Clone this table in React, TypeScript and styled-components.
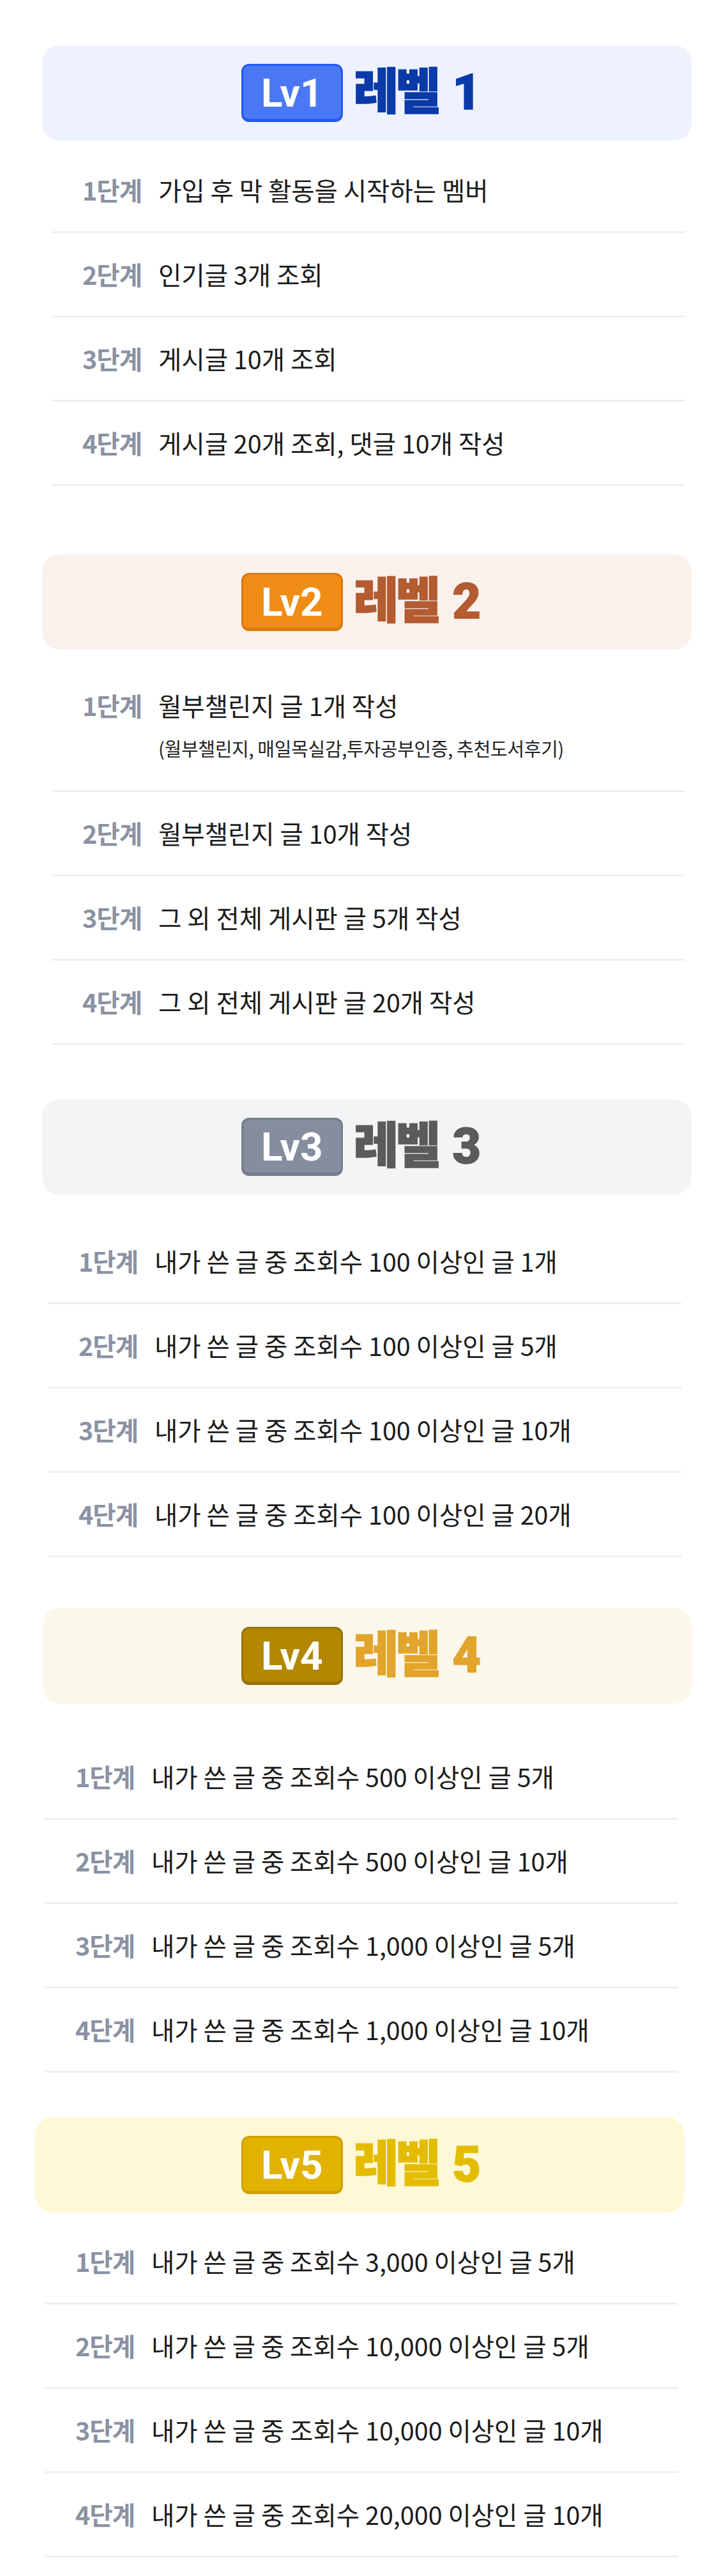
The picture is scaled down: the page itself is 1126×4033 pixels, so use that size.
import type { FC } from 'react';
import styled, { createGlobalStyle } from 'styled-components';

type Step = { text: string; sub?: string };
type Level = {
  no: number;
  bg: string;
  badge: string;
  badgeEdge: string;
  title: string;
  headerX: number;
  rowsX: number;
  top: number;
  gap: number;
  steps: Step[];
};

const levels: Level[] = [
  {
    no: 1,
    bg: '#eef2fe',
    badge: '#4a78f5',
    badgeEdge: '#2659f0',
    title: '#0a3aa8',
    headerX: 66,
    rowsX: 81,
    top: 71,
    gap: 13,
    steps: [
      { text: '가입 후 막 활동을 시작하는 멤버' },
      { text: '인기글 3개 조회' },
      { text: '게시글 10개 조회' },
      { text: '게시글 20개 조회, 댓글 10개 작성' },
    ],
  },
  {
    no: 2,
    bg: '#faf1ed',
    badge: '#ef8c15',
    badgeEdge: '#dc760d',
    title: '#b35b31',
    headerX: 66,
    rowsX: 81,
    top: 107,
    gap: 23,
    steps: [
      { text: '월부챌린지 글 1개 작성', sub: '(월부챌린지, 매일목실감,투자공부인증, 추천도서후기)' },
      { text: '월부챌린지 글 10개 작성' },
      { text: '그 외 전체 게시판 글 5개 작성' },
      { text: '그 외 전체 게시판 글 20개 작성' },
    ],
  },
  {
    no: 3,
    bg: '#f3f4f6',
    badge: '#858d9f',
    badgeEdge: '#747c8e',
    title: '#5b5b5b',
    headerX: 66,
    rowsX: 75,
    top: 85,
    gap: 40,
    steps: [
      { text: '내가 쓴 글 중 조회수 100 이상인 글 1개' },
      { text: '내가 쓴 글 중 조회수 100 이상인 글 5개' },
      { text: '내가 쓴 글 중 조회수 100 이상인 글 10개' },
      { text: '내가 쓴 글 중 조회수 100 이상인 글 20개' },
    ],
  },
  {
    no: 4,
    bg: '#fbf7ea',
    badge: '#b38700',
    badgeEdge: '#997300',
    title: '#e2a42a',
    headerX: 66,
    rowsX: 70,
    top: 80,
    gap: 50,
    steps: [
      { text: '내가 쓴 글 중 조회수 500 이상인 글 5개' },
      { text: '내가 쓴 글 중 조회수 500 이상인 글 10개' },
      { text: '내가 쓴 글 중 조회수 1,000 이상인 글 5개' },
      { text: '내가 쓴 글 중 조회수 1,000 이상인 글 10개' },
    ],
  },
  {
    no: 5,
    bg: '#fff8d7',
    badge: '#e1b300',
    badgeEdge: '#cfa000',
    title: '#e3bc00',
    headerX: 55,
    rowsX: 70,
    top: 70,
    gap: 12,
    steps: [
      { text: '내가 쓴 글 중 조회수 3,000 이상인 글 5개' },
      { text: '내가 쓴 글 중 조회수 10,000 이상인 글 5개' },
      { text: '내가 쓴 글 중 조회수 10,000 이상인 글 10개' },
      { text: '내가 쓴 글 중 조회수 20,000 이상인 글 10개' },
    ],
  },
];

const App: FC = () => {
  return (
    <>
      <GlobalStyle />
      <Page>
        {levels.map((lv) => (
          <Section key={lv.no} $top={lv.top}>
            <Header $bg={lv.bg} $x={lv.headerX}>
              <Badge $bg={lv.badge} $edge={lv.badgeEdge}>
                Lv{lv.no}
              </Badge>
              <Title $color={lv.title}>레벨 {lv.no}</Title>
            </Header>
            <Rows $x={lv.rowsX} $gap={lv.gap}>
              {lv.steps.map((s, i) => (
                <Row key={i}>
                  <StepLabel>{i + 1}단계</StepLabel>
                  <StepBody>
                    <StepText>{s.text}</StepText>
                    {s.sub && <SubText>{s.sub}</SubText>}
                  </StepBody>
                </Row>
              ))}
            </Rows>
          </Section>
        ))}
      </Page>
    </>
  );
};

export default App;

const GlobalStyle = createGlobalStyle`
  html, body {
    margin: 0;
    padding: 0;
    background: #ffffff;
  }
  body {
    font-family: "Noto Sans CJK KR", "Noto Sans", sans-serif;
    color: #1b1b1b;
  }
`;

const Page = styled.main`
  width: 1126px;
  padding-bottom: 29px;
`;

const Section = styled.section<{ $top: number }>`
  padding-top: ${(p) => p.$top}px;
`;

// group is centred on the page, not on the (slightly offset) header box
const Header = styled.div<{ $bg: string; $x: number }>`
  box-sizing: border-box;
  width: 1017px;
  height: 149px;
  margin-left: ${(p) => p.$x}px;
  padding-right: ${(p) => 2 * (p.$x - 54.5)}px;
  background: ${(p) => p.$bg};
  border-radius: 27px;
  display: flex;
  align-items: center;
  justify-content: center;
  gap: 17px;
`;

const Badge = styled.span<{ $bg: string; $edge: string }>`
  box-sizing: border-box;
  height: 91px;
  padding: 2px 28px 0;
  display: flex;
  align-items: center;
  background: ${(p) => p.$bg};
  border: 3px solid ${(p) => p.$edge};
  border-bottom-width: 5px;
  border-radius: 12px;
  color: #ffffff;
  font-family: Roboto, "Noto Sans", sans-serif;
  font-weight: 700;
  font-size: 62px;
  line-height: 1;
`;

const Title = styled.h2<{ $color: string }>`
  margin: 0;
  color: ${(p) => p.$color};
  font-family: Roboto, "Noto Sans CJK KR", sans-serif;
  font-weight: 900;
  font-size: 77px;
  letter-spacing: -5px;
  word-spacing: 9px;
  line-height: 1;
  -webkit-text-stroke: 1.5px ${(p) => p.$color};
`;

const Rows = styled.ul<{ $x: number; $gap: number }>`
  list-style: none;
  margin: ${(p) => p.$gap}px 0 0 ${(p) => p.$x}px;
  padding: 0;
  width: 992px;
`;

const Row = styled.li`
  display: flex;
  align-items: flex-start;
  gap: 26px;
  padding: 38px 0 39px 48px;
  border-bottom: 3px solid #efefef;
  font-size: 39.5px;
  line-height: 52px;
`;

const StepLabel = styled.span`
  color: #8a92a3;
  font-weight: 600;
  flex-shrink: 0;
  letter-spacing: -1px;
`;

const StepBody = styled.div`
  display: flex;
  flex-direction: column;
`;

const StepText = styled.span`
  color: #1b1b1b;
  font-weight: 400;
`;

const SubText = styled.span`
  margin: 18px 0 4px;
  font-size: 29px;
  line-height: 46px;
  color: #222222;
  letter-spacing: -0.3px;
`;
